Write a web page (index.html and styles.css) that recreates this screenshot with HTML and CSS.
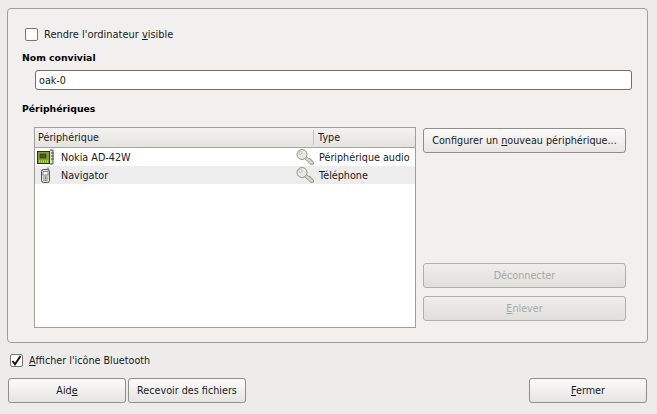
FILE: index.html
```html
<!DOCTYPE html>
<html lang="fr">
<head>
    <meta charset="UTF-8">
    <meta name="viewport" content="width=device-width, initial-scale=1.0">
    <title>Préférences Bluetooth</title>
    <link rel="stylesheet" href="styles.css">
</head>
<body>
    <div class="dialog">
        <div class="frame">
            <label class="check visible-check">
                <span class="box"></span>
                <span>Rendre l'ordinateur <u>v</u>isible</span>
            </label>
            <h2 class="name-title">Nom convivial</h2>
            <input class="name-input" type="text" value="oak-0">
            <h2 class="devices-title">Périphériques</h2>
            <div class="devices">
                <div class="list">
                    <div class="list-head">
                        <div class="col-device">Périphérique</div>
                        <div class="col-type">Type</div>
                    </div>
                    <div class="row">
                        <svg class="dev-icon" width="18" height="16" viewBox="0 0 18 16">
                            <rect x="0.5" y="2.5" width="12" height="12" fill="#84a01f" stroke="#2e3410"/>
                            <rect x="3" y="5" width="6" height="4" fill="#46543c" stroke="#1e2410" stroke-width="0.5"/>
                            <path d="M2 12.5h9" stroke="#e8e040" stroke-width="2" stroke-dasharray="1 1"/>
                            <path d="M13 1h3v14h-3" fill="#dcdcd8" stroke="#55554f"/>
                            <path d="M14 4h3M14 7h3M14 10h3" stroke="#55554f"/>
                        </svg>
                        <div class="dev-name">Nokia AD-42W</div>
                        <svg class="key" width="18" height="16" viewBox="0 0 18 16">
                            <path d="M8 9l7 6.500 2.500-.5.200-2-1.400-.3-.3-1.500-1.500-.2-.3-1.500-1.700-.2L10 7z" fill="#d8d8d4" stroke="#8c8c87" stroke-width="0.900"/>
                            <circle cx="6" cy="5.500" r="5" fill="#e8e8e4" stroke="#94948f"/>
                            <circle cx="4.500" cy="4" r="1.500" fill="#fff" stroke="#a5a5a0" stroke-width="0.700"/>
                        </svg>
                        <div class="dev-type">Périphérique audio</div>
                    </div>
                    <div class="row row-alt">
                        <svg class="dev-icon" width="18" height="16" viewBox="0 0 18 16">
                            <path d="M10 0.500h2v3h-2z" fill="#9a9a96"/>
                            <rect x="4.500" y="2.500" width="8" height="13" rx="2" fill="#e4e4e0" stroke="#55554f"/>
                            <rect x="6" y="4.500" width="5" height="3.500" fill="#fff" stroke="#6a6a66" stroke-width="0.800"/>
                            <path d="M6.500 10h4M6.500 11.700h4M6.500 13.400h4" stroke="#55554f" stroke-dasharray="1 0.500"/>
                        </svg>
                        <div class="dev-name">Navigator</div>
                        <svg class="key" width="18" height="16" viewBox="0 0 18 16">
                            <path d="M8 9l7 6.500 2.500-.5.200-2-1.400-.3-.3-1.500-1.500-.2-.3-1.500-1.700-.2L10 7z" fill="#d8d8d4" stroke="#8c8c87" stroke-width="0.900"/>
                            <circle cx="6" cy="5.500" r="5" fill="#e8e8e4" stroke="#94948f"/>
                            <circle cx="4.500" cy="4" r="1.500" fill="#fff" stroke="#a5a5a0" stroke-width="0.700"/>
                        </svg>
                        <div class="dev-type">Téléphone</div>
                    </div>
                </div>
                <div class="side">
                    <button class="btn" type="button">Configurer un <u>n</u>ouveau périphérique...</button>
                    <div class="side-bottom">
                        <button class="btn" type="button" disabled>Déconnecter</button>
                        <button class="btn" type="button" disabled><u>E</u>nlever</button>
                    </div>
                </div>
            </div>
        </div>
        <label class="check bt-check">
            <span class="box">
                <svg width="13" height="13" viewBox="0 0 13 13">
                    <path d="M2.500 7l2.500 3.200L10.500 2" fill="none" stroke="#1a1a1a" stroke-width="2"/>
                </svg>
            </span>
            <span><u>A</u>fficher l'icône Bluetooth</span>
        </label>
        <div class="actions">
            <button class="btn" type="button">Aid<u>e</u></button>
            <button class="btn" type="button">Recevoir des fichiers</button>
            <button class="btn btn-close" type="button"><u>F</u>ermer</button>
        </div>
    </div>
</body>
</html>
```

FILE: styles.css
```css
* {
    box-sizing: border-box;
}

html, body {
    margin: 0;
    height: 100%;
}

body {
    font-family: 'DejaVu Sans', sans-serif;
    font-size: 9.65px;
    color: #1a1a1a;
    background-color: #edecea;
}

.dialog {
    padding: 8px 9px 0 7px;
}

.frame {
    height: 335px;
    padding: 19px 15px 0 14px;
    background-color: #f1f0ee;
    border: 1px solid #9f9e9b;
    border-radius: 4px;
}

.check {
    display: flex;
    align-items: center;
    gap: 6px;
    height: 12px;
}

.box {
    display: block;
    width: 13px;
    height: 13px;
    background-color: #ffffff;
    border: 1px solid #77766f;
    border-radius: 2px;
}

.box svg {
    display: block;
    margin: -1px;
}

.visible-check {
    margin-left: 3px;
    font-size: 9.85px;
}

h2 {
    margin: 0;
    font-size: 9.3px;
    font-weight: bold;
    color: #000000;
    line-height: 13px;
}

.name-title {
    margin-top: 11px;
}

.name-input {
    display: block;
    width: 597px;
    height: 20px;
    margin: 6px 0 0 13px;
    padding: 0 3px;
    font-family: inherit;
    font-size: 9.65px;
    color: #1a1a1a;
    background-color: #ffffff;
    border: 1px solid #6f6e69;
    border-radius: 3px;
    outline: none;
}

.devices-title {
    margin-top: 12px;
}

.devices {
    display: flex;
    gap: 7px;
    margin: 12px 0 0 12px;
}

.list {
    width: 382px;
    height: 201px;
    background-color: #ffffff;
    border: 1px solid #9f9e9b;
}

.list-head {
    display: flex;
    height: 20px;
    line-height: 19px;
    background: linear-gradient(#f4f3f1, #e4e3e0);
    border-bottom: 1px solid #a5a4a0;
}

.col-device {
    width: 278px;
    padding-left: 3px;
}

.col-type {
    height: 15px;
    margin-top: 2px;
    padding-left: 4px;
    line-height: 15px;
    border-left: 1px solid #c4c3bf;
}

.row {
    display: flex;
    align-items: center;
    height: 18px;
}

.row-alt {
    background-color: #ededed;
}

.dev-icon {
    flex: none;
    margin-left: 2px;
}

.dev-name {
    flex: none;
    width: 235px;
    margin-left: 6px;
}

.key {
    flex: none;
}

.dev-type {
    margin-left: 5px;
    white-space: nowrap;
}

.side {
    display: flex;
    flex-direction: column;
    justify-content: space-between;
    width: 203px;
    height: 193px;
    margin-top: 1px;
}

.side-bottom {
    display: flex;
    flex-direction: column;
    gap: 8px;
}

.btn {
    display: block;
    width: 100%;
    height: 25px;
    padding: 0;
    font-family: inherit;
    font-size: 9.65px;
    color: #1a1a1a;
    background: linear-gradient(#fbfbfa, #e6e5e2);
    border: 1px solid #8f8e8a;
    border-radius: 3px;
}

.btn:disabled {
    color: #a9a8a5;
    background: linear-gradient(#efeeec, #e0dfdc);
    border-color: #b0afab;
}

.bt-check {
    margin: 11px 0 0 3px;
}

.actions {
    display: flex;
    gap: 2px;
    margin: 12px 1px 0 1px;
}

.actions .btn {
    width: 118px;
}

.actions .btn-close {
    margin-left: auto;
}
```
